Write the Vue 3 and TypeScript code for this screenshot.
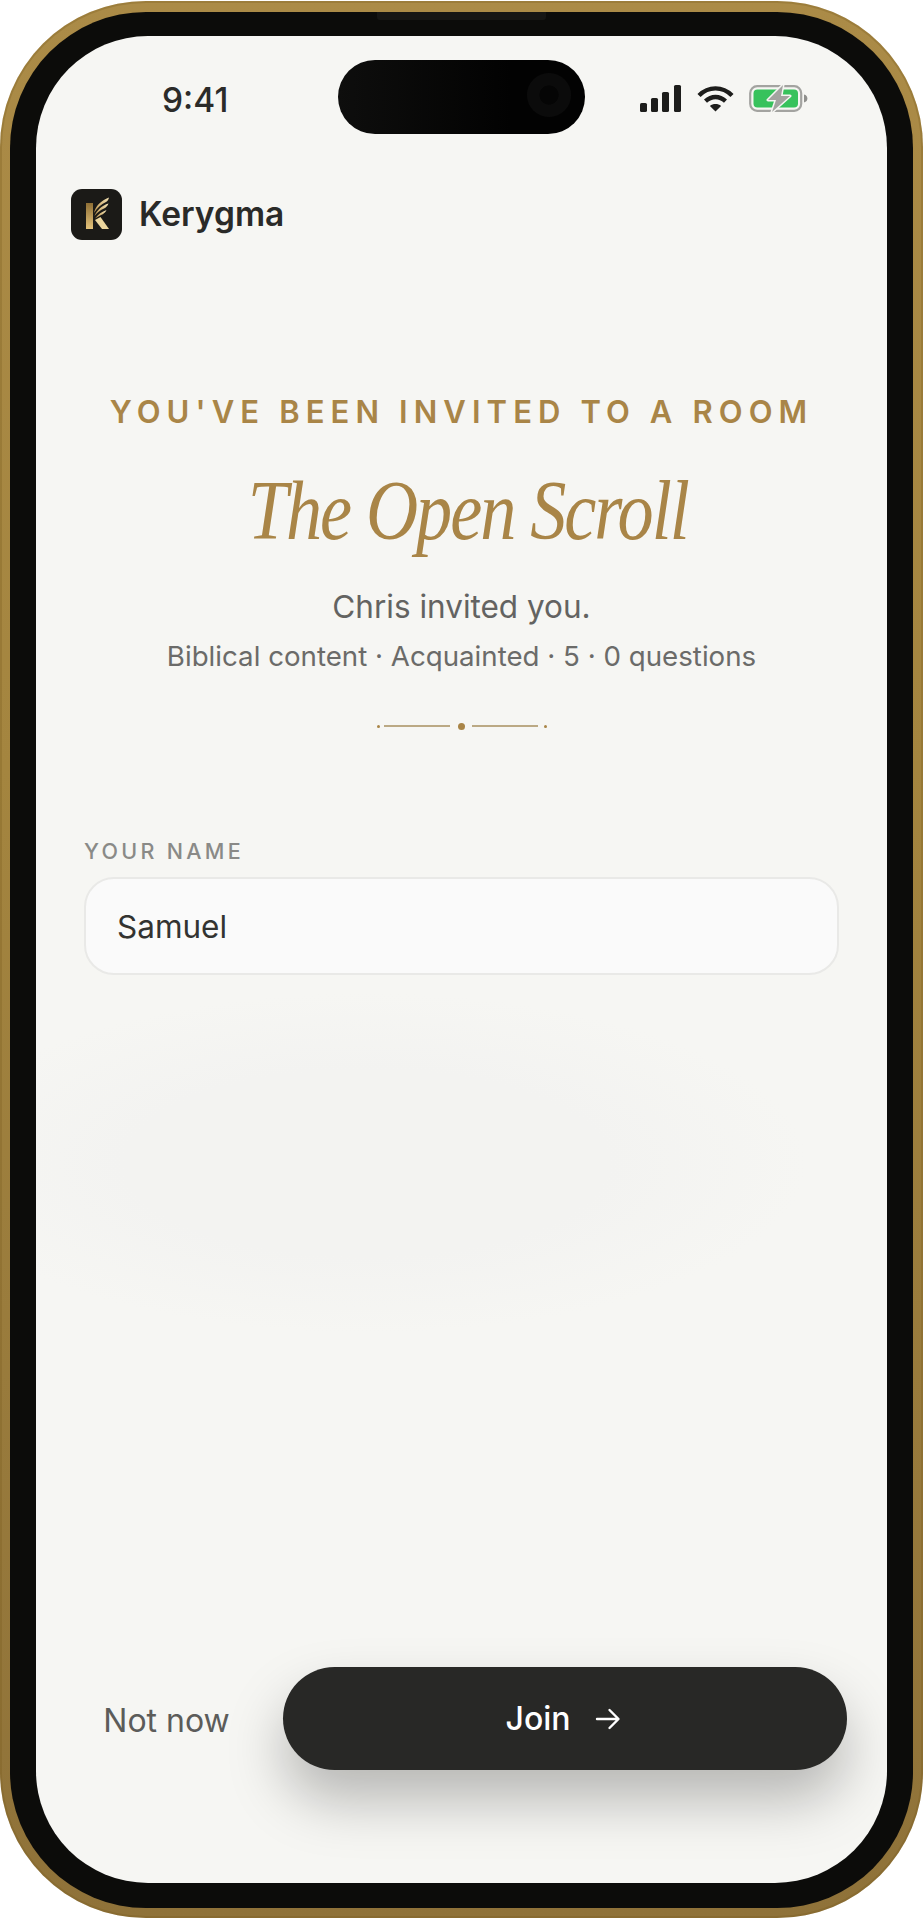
<script setup lang="ts">
import { ref } from 'vue'

const name = ref('Samuel')
const bars = [
  { x: 0, y: 18, h: 9 },
  { x: 11, y: 13, h: 14 },
  { x: 22, y: 7, h: 20 },
  { x: 34, y: 0, h: 27 },
]
</script>

<template>
  <div class="page">
    <div class="phone">
      <div class="bezel">
        <span class="speaker"></span>
        <div class="screen">
          <div class="status">
            <span class="time">9:41</span>
            <div class="island"><span class="lens"></span></div>
            <div class="status-icons">
              <svg width="42" height="27" viewBox="0 0 42 27">
                <rect v-for="b in bars" :key="b.x" :x="b.x" :y="b.y" width="7" :height="b.h" rx="1.6" fill="#1d1d1b" />
              </svg>
              <svg width="37" height="27" viewBox="0 0 37 27" fill="none" stroke="#1d1d1b" stroke-width="4.4">
                <path d="M2 10.5C11.5 1 25.5 1 35 10.5" />
                <path d="M8.5 16.2C14.5 10.6 22.5 10.6 28.5 16.2" />
                <path d="M18.5 26.5l-5.6-5.6c3-2.6 8.2-2.6 11.2 0z" fill="#1d1d1b" stroke="none" />
              </svg>
              <svg width="59" height="27" viewBox="0 0 59 27">
                <rect x="1.2" y="1.2" width="51" height="24.6" rx="7" fill="none" stroke="#a3a3a0" stroke-width="2.2" />
                <rect x="4.5" y="4.5" width="44.5" height="18" rx="4" fill="#37c25c" />
                <path d="M55 9.5c2.4.6 3.4 2.2 3.4 4s-1 3.4-3.4 4z" fill="#8f8f8c" />
                <path d="M34 0 19 15h8L23 27 41 11h-9z" fill="#a3a3a0" stroke="#f5f5f2" stroke-width="3" stroke-linejoin="round" paint-order="stroke" />
              </svg>
            </div>
          </div>

          <header class="brand">
            <div class="logo">
              <svg width="51" height="51" viewBox="0 0 51 51">
                <defs>
                  <linearGradient id="gold" x1="0" y1="0" x2="0" y2="1">
                    <stop offset="0" stop-color="#8f6f35" />
                    <stop offset="1" stop-color="#e3c27a" />
                  </linearGradient>
                  <linearGradient id="wing" x1="0" y1="1" x2="1" y2="0">
                    <stop offset="0" stop-color="#b88f48" />
                    <stop offset="1" stop-color="#f3e2b4" />
                  </linearGradient>
                </defs>
                <rect x="15" y="14" width="7" height="26" fill="url(#gold)" />
                <path d="M23 24C24.5 17 30 11.5 38 8.5 37.5 10.5 36.5 12 35 13 30 15.5 26 19 23 24Z" fill="url(#wing)" />
                <path d="M23.5 27C26 21 31 16.5 37.5 14.5 36.5 17 35 18.5 33 19.5 29.5 21 26.5 23.5 23.5 27Z" fill="url(#wing)" />
                <path d="M24 29.5C27 25.5 31 22.5 35.5 21 34.5 23.5 32.5 25 30 26 28 27 26 28.2 24 29.5Z" fill="url(#wing)" />
                <path d="M24 31 29.5 28 38 40H31Z" fill="#ecd69e" />
              </svg>
            </div>
            <span class="brand-name">Kerygma</span>
          </header>

          <section class="invite">
            <p class="eyebrow">YOU'VE BEEN INVITED TO A ROOM</p>
            <h1 class="title">The Open Scroll</h1>
            <p class="from">Chris invited you.</p>
            <p class="meta">Biblical content · Acquainted · 5 · 0 questions</p>
            <div class="divider">
              <i class="tick"></i><i class="rule"></i><i class="dot"></i><i class="rule"></i><i class="tick"></i>
            </div>
          </section>

          <form class="field" @submit.prevent>
            <label class="field-label" for="your-name">YOUR NAME</label>
            <input id="your-name" v-model="name" class="field-input" />
          </form>

          <footer class="actions">
            <button class="later" type="button">Not now</button>
            <button class="join" type="button">
              Join
              <svg width="26" height="22" viewBox="0 0 26 22" fill="none" stroke="#fff" stroke-width="2.4" stroke-linecap="round" stroke-linejoin="round">
                <path d="M2 11h21M14.5 2l9 9-9 9" />
              </svg>
            </button>
          </footer>
        </div>
      </div>
    </div>
  </div>
</template>

<style scoped>
.page {
  width: 923px;
  height: 1920px;
  padding-top: 1px;
  box-sizing: border-box;
  overflow: hidden;
  font-family: Inter, "Liberation Sans", sans-serif;
}
.phone {
  height: 1917px;
  padding: 11px 10px 10px;
  box-sizing: border-box;
  border-radius: 146px;
  background: linear-gradient(180deg, #ab8b47 0%, #a4853f 40%, #8f7239 100%);
  box-shadow: inset 0 0 0 2px rgba(120, 90, 30, 0.28);
}
.bezel {
  position: relative;
  height: 100%;
  padding: 24px 26px 25px;
  box-sizing: border-box;
  border-radius: 136px;
  background: #0c0c0a;
}
.speaker {
  position: absolute;
  top: 0;
  left: 367px;
  width: 169px;
  height: 8px;
  background: #161614;
  border-radius: 0 0 3px 3px;
}
.screen {
  height: 100%;
  display: flex;
  flex-direction: column;
  overflow: hidden;
  border-radius: 112px;
  background:
    radial-gradient(ellipse 440px 170px at 330px 1127px, #f3f3f1 0%, #f3f3f1 55%, rgba(243, 243, 241, 0) 100%),
    #f6f6f3;
}

.status {
  display: flex;
  align-items: center;
  height: 74px;
  margin-top: 24px;
  padding-left: 126px;
}
.time {
  width: 176px;
  padding-top: 7px;
  font-size: 33.5px;
  font-weight: 500;
  color: #2b2b29;
  line-height: 1;
}
.island {
  position: relative;
  width: 247px;
  height: 74px;
  border-radius: 37px;
  background: linear-gradient(90deg, #0e0e0d 0%, #020202 70%);
}
.lens {
  position: absolute;
  right: 14px;
  top: 13px;
  width: 44px;
  height: 44px;
  border-radius: 50%;
  background: radial-gradient(circle, #050505 0 30%, #0b0b0b 32% 100%);
}
.status-icons {
  display: flex;
  align-items: flex-start;
  gap: 15px;
  margin-left: 55px;
  margin-top: 3px;
}

.brand {
  display: flex;
  align-items: center;
  gap: 17px;
  margin: 55px 0 0 35px;
}
.logo {
  width: 51px;
  height: 51px;
  border-radius: 11px;
  background: #1b1a17;
}
.logo svg { display: block; }
.brand-name {
  font-size: 33.5px;
  font-weight: 600;
  color: #2a2a28;
  line-height: 1;
}

.invite {
  display: flex;
  flex-direction: column;
  align-items: center;
  margin-top: 154px;
}
.eyebrow {
  margin: 0;
  font-size: 31px;
  line-height: 36px;
  font-weight: 600;
  letter-spacing: 6.1px;
  color: #a98547;
  white-space: nowrap;
}
.title {
  margin: 35px 0 0;
  font-family: "Liberation Serif", serif;
  font-style: italic;
  font-weight: 400;
  font-size: 84px;
  line-height: 92px;
  letter-spacing: -2.4px;
  color: #a98547;
  white-space: nowrap;
  transform: translateX(6px) scaleX(0.86);
}
.from {
  margin: 31px 0 0;
  font-size: 31.5px;
  line-height: 38px;
  color: #636361;
}
.meta {
  margin: 13px 0 0;
  font-size: 27.7px;
  line-height: 34px;
  color: #6b6b69;
  white-space: nowrap;
}
.divider {
  display: flex;
  align-items: center;
  gap: 4px;
  margin-top: 47px;
  height: 12px;
}
.tick { width: 3px; height: 3px; border-radius: 50%; background: #a98547; }
.rule { width: 66px; height: 2px; background: #bba984; margin-right: 2px; }
.dot { width: 7px; height: 7px; border-radius: 50%; background: #a98547; margin: 0 3px 0 2px; }

.field {
  display: flex;
  flex-direction: column;
  margin: 107px 48px 0 48px;
}
.field-label {
  font-size: 21.5px;
  line-height: 24px;
  font-weight: 500;
  letter-spacing: 3.3px;
  color: #8a8a87;
}
.field-input {
  height: 98px;
  margin-top: 14px;
  padding: 0 31px;
  box-sizing: border-box;
  border: 2px solid #e9e9e7;
  border-radius: 30px;
  outline: none;
  background: #fafafa;
  font-family: inherit;
  font-size: 31.5px;
  color: #333331;
}

.actions {
  display: flex;
  align-items: center;
  margin: auto 40px 113px 0;
}
.later {
  width: 245px;
  margin-right: 2px;
  padding: 3px 0 0 16px;
  border: 0;
  background: none;
  font-family: inherit;
  font-size: 32px;
  font-weight: 400;
  color: #5c5c5a;
}
.join {
  flex: 1;
  height: 103px;
  padding-right: 10px;
  display: flex;
  align-items: center;
  justify-content: center;
  gap: 24px;
  border: 0;
  border-radius: 52px;
  background: #282826;
  box-shadow: 0 30px 56px rgba(0, 0, 0, 0.26);
  font-family: inherit;
  font-size: 32px;
  font-weight: 500;
  color: #fff;
}
</style>

<style>
html, body { margin: 0; background: #fff; }
</style>
